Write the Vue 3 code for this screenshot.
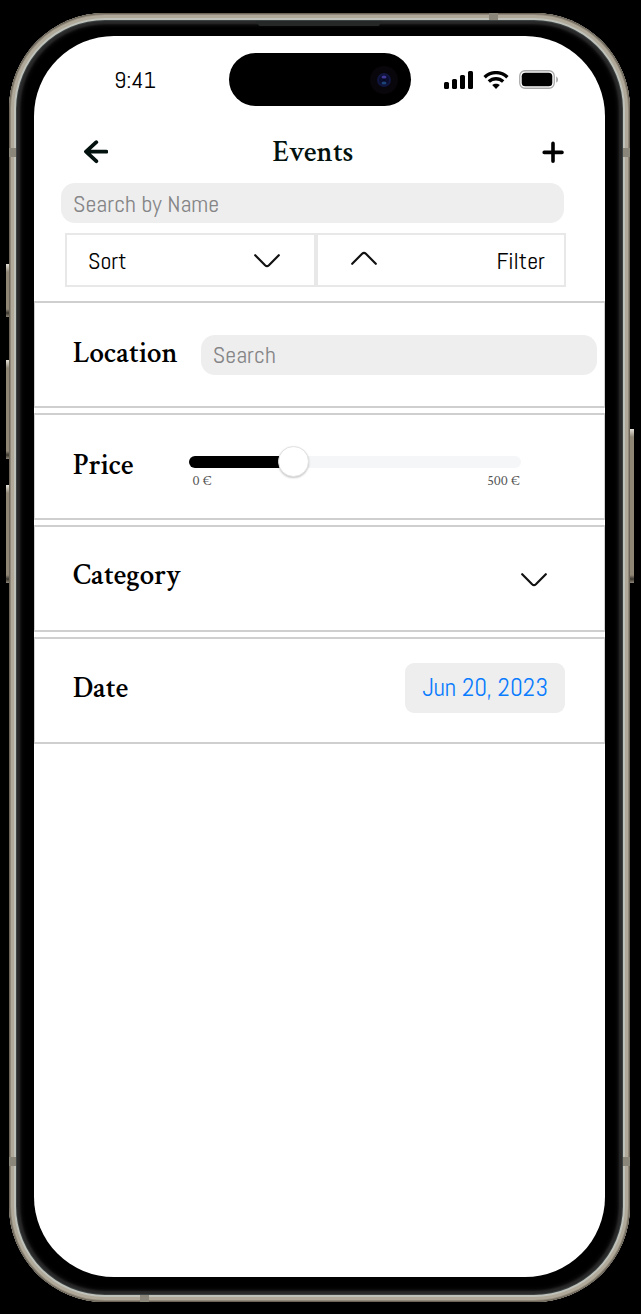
<script setup>
import { ref, computed } from 'vue'

const name = ref('')
const place = ref('')
const price = ref(147)
const maxPrice = 500
const fill = computed(() => `${(price.value / maxPrice) * 100}%`)
</script>

<template>
  <div class="stage">
    <div class="phone">
      <span class="key key-action"></span>
      <span class="key key-up"></span>
      <span class="key key-down"></span>
      <span class="key key-power"></span>
      <span class="band band-left-top"></span>
      <span class="band band-right-top"></span>
      <span class="band band-left-bottom"></span>
      <span class="band band-right-bottom"></span>
      <span class="band band-top"></span>
      <span class="band band-bottom"></span>
      <span class="speaker"></span>

      <div class="screen">
        <div class="status">
          <span class="time">9:41</span>
          <div class="island">
            <svg width="28" height="28" viewBox="0 0 28 28" aria-hidden="true">
              <circle cx="14" cy="14" r="14" fill="#08060a" />
              <circle cx="14" cy="14" r="7" fill="#10163f" />
              <circle cx="14" cy="14" r="5" fill="#0a0d2c" />
              <ellipse cx="14" cy="11" rx="2.5" ry="1.6" fill="#40389a" />
              <ellipse cx="14" cy="17" rx="2.5" ry="1.6" fill="#1c4478" />
              <circle cx="14" cy="14" r="1" fill="#05071c" />
            </svg>
          </div>
          <div class="signals">
            <svg width="29" height="18" viewBox="0 0 29 18" aria-hidden="true">
              <rect x="0" y="11" width="5" height="7" rx="1.5" />
              <rect x="8" y="8" width="5" height="10" rx="1.5" />
              <rect x="16" y="4" width="5" height="14" rx="1.5" />
              <rect x="24" y="0" width="5" height="18" rx="1.5" />
            </svg>
            <svg width="26" height="18" viewBox="0 0 26 18" fill="none" stroke="#000" stroke-width="3.4" aria-hidden="true">
              <path d="M1.6 6.2C8 .1 18 .1 24.4 6.2" />
              <path d="M5.8 10.6C10 6.7 16 6.7 20.2 10.6" />
              <path d="M13 18l-3.8-3.9c2.1-1.9 5.5-1.9 7.6 0z" fill="#000" stroke="none" />
            </svg>
            <svg width="40" height="19" viewBox="0 0 40 19" aria-hidden="true">
              <rect x=".75" y=".75" width="34.5" height="17.5" rx="5.2" fill="none" stroke="#a8a8a8" stroke-width="1.3" />
              <rect x="2.7" y="2.7" width="30.6" height="13.6" rx="3.6" />
              <path d="M37.2 6.4c2.4 1 2.4 5.2 0 6.2z" fill="#a8a8a8" />
            </svg>
          </div>
        </div>

        <header class="bar">
          <button class="icon-button back" type="button" aria-label="Back">
            <svg width="24" height="24" viewBox="0 0 24 24" fill="none" stroke="#03120f" stroke-width="3.8" stroke-linecap="round" stroke-linejoin="round">
              <path d="M12.3 2.2L2 11.6l10.3 9.6M2.6 11.6h19.7" />
            </svg>
          </button>
          <h1>Events</h1>
          <button class="icon-button add" type="button" aria-label="Add event">
            <svg width="22" height="22" viewBox="0 0 22 22" fill="none" stroke="#000" stroke-width="3.6" stroke-linecap="round">
              <path d="M11 2.4v17.8M2.2 11.4h17.8" />
            </svg>
          </button>
        </header>

        <input v-model="name" class="field name-field" type="text" placeholder="Search by Name" aria-label="Search by Name" />

        <div class="tools">
          <button class="tool" type="button">
            <span>Sort</span>
            <svg class="chevron lowered" width="26" height="14" viewBox="0 0 26 14"><path d="M1.2 1.2l9.9 10q1.9 1.7 3.8 0l9.9-10" /></svg>
          </button>
          <button class="tool" type="button">
            <svg class="chevron raised" width="26" height="14" viewBox="0 0 26 14"><path d="M1.2 12.8l9.9-10q1.9-1.7 3.8 0l9.9 10" /></svg>
            <span>Filter</span>
          </button>
        </div>

        <form class="filters" @submit.prevent>
          <div class="card location">
            <label for="place">Location</label>
            <input id="place" v-model="place" class="field" type="text" placeholder="Search" />
          </div>
          <div class="card price">
            <label for="price">Price</label>
            <div class="slider">
              <input id="price" v-model.number="price" type="range" min="0" :max="maxPrice" :style="{ '--fill': fill }" />
              <div class="limits"><span>0 €</span><span>500 €</span></div>
            </div>
          </div>
          <div class="card category">
            <label for="category">Category</label>
            <button id="category" class="icon-button" type="button">
              <svg class="chevron lowered" width="26" height="14" viewBox="0 0 26 14"><path d="M1.2 1.2l9.9 10q1.9 1.7 3.8 0l9.9-10" /></svg>
            </button>
          </div>
          <div class="card date">
            <label for="date">Date</label>
            <button id="date" class="chip" type="button">Jun 20, 2023</button>
          </div>
        </form>
      </div>
    </div>
  </div>
</template>

<style>
body {
  background: #000;
}
</style>

<style scoped>
.stage {
  display: flex;
  box-sizing: border-box;
  min-height: 100vh;
  padding: 13px 11px 12px 9px;
  background: #000;
  font-family: Abel, "Roboto Condensed", Lato, sans-serif;
  font-size: 24px;
  color: #000;
}

.phone {
  position: relative;
  display: flex;
  flex: 1;
  padding: 23px 25px 25px;
  border-radius: 96px;
  background: #000;
  box-shadow:
    inset 0 0 0 1px #6c6558,
    inset 0 0 0 2px #8f887a,
    inset 0 0 0 5px #b0a999,
    inset 0 0 0 7px #bfc2ba,
    inset 0 0 0 8px #3c4242,
    inset 0 0 2px 11px #2a2a2b,
    inset 0 0 4px 12px #161617;
}

.screen {
  flex: 1;
  min-width: 0;
  overflow: hidden;
  border-radius: 80px;
  background: #fff;
}

.key {
  position: absolute;
  left: -3px;
  width: 3px;
  background: linear-gradient(#e4e0d8, #8f8676 8px, #8f8676 calc(100% - 8px), #3a362f calc(100% - 4px), #8f8676);
}
.key-action { top: 251px; height: 53px; }
.key-up { top: 347px; height: 99px; }
.key-down { top: 472px; height: 98px; }
.key-power { top: 416px; right: -4px; left: auto; width: 4px; height: 154px; }

.band {
  position: absolute;
  width: 7px;
  height: 9px;
  background: #8a867a;
}
.band-left-top { top: 135px; left: 0; }
.band-right-top { top: 135px; right: 0; }
.band-left-bottom { bottom: 136px; left: 0; }
.band-right-bottom { right: 0; bottom: 136px; }
.band-top { top: 0; right: 132px; width: 9px; height: 7px; }
.band-bottom { bottom: 0; left: 131px; width: 9px; height: 7px; }

.speaker {
  position: absolute;
  top: 8px;
  left: 50%;
  width: 127px;
  height: 5px;
  margin-left: -64px;
  background: #252827;
  clip-path: polygon(0 0, 100% 0, 97% 100%, 3% 100%);
}

.status {
  display: grid;
  grid-template-columns: 1fr 182px 1fr;
  align-items: center;
  padding-top: 17px;
}
.time {
  padding-left: 80px;
}
.island {
  display: flex;
  align-items: center;
  justify-content: flex-end;
  box-sizing: border-box;
  height: 53px;
  padding-right: 13px;
  border-radius: 27px;
  background: #000;
}
.signals {
  display: flex;
  align-items: center;
  justify-content: flex-end;
  gap: 10px;
  padding-right: 46px;
}

.bar {
  display: grid;
  grid-template-columns: 1fr auto 1fr;
  align-items: center;
  height: 44px;
  margin-top: 24px;
  padding: 0 41px 0 28px;
}
h1,
label {
  margin: 0;
  font: 600 29px/32px "Crimson Text", "Liberation Serif", serif;
}
label {
  padding-bottom: 4px;
}
h1 {
  color: #03120f;
}

button {
  padding: 0;
  border: 0;
  background: none;
  color: inherit;
  font: inherit;
}
svg {
  display: block;
  flex: none;
}
.back {
  justify-self: start;
  padding-left: 22px;
}
.add {
  justify-self: end;
}

.field {
  display: block;
  box-sizing: border-box;
  width: 100%;
  min-width: 0;
  height: 40px;
  padding: 0 12px;
  border: 0;
  border-radius: 14px;
  background: #eee;
  color: #000;
  font: inherit;
}
.field::placeholder {
  color: #858587;
  opacity: 1;
}
.name-field {
  width: calc(100% - 68px);
  margin: 9px 41px 0 27px;
}

.tools {
  display: grid;
  grid-template-columns: 1fr 1fr;
  margin: 10px 39px 0 31px;
}
.tool {
  display: flex;
  align-items: center;
  justify-content: space-between;
  height: 54px;
  padding: 0 34px 0 21px;
  border: 2px solid #e8e8e8;
}
.tool + .tool {
  padding: 0 19px 0 33px;
}
.chevron {
  fill: none;
  stroke: #111;
  stroke-width: 2.2;
  stroke-linecap: round;
}
.raised {
  margin-bottom: 4px;
}
.lowered {
  margin-top: 2px;
}

.filters {
  display: grid;
  gap: 5px;
  margin-top: 14px;
}
.card {
  display: flex;
  align-items: center;
  box-sizing: border-box;
  height: 107px;
  padding-left: 38px;
  border: solid #cfcfcf;
  border-width: 2px 1px;
}
.location {
  gap: 23px;
  padding-right: 7px;
}
.price {
  justify-content: space-between;
  padding-right: 83px;
}
.category {
  justify-content: space-between;
  padding-right: 57px;
}
.category label {
  padding-bottom: 8px;
}
.date {
  justify-content: space-between;
  padding-right: 39px;
  padding-bottom: 6px;
}
.date label {
  padding-bottom: 0;
}

.slider {
  width: 74%;
  padding-top: 3px;
}
.slider input {
  display: block;
  width: 100%;
  height: 31px;
  margin: 0;
  appearance: none;
  background: none;
}
.slider input::-webkit-slider-runnable-track {
  height: 12px;
  border-radius: 6px;
  background: linear-gradient(90deg, #000 var(--fill), #f5f6f8 var(--fill));
}
.slider input::-webkit-slider-thumb {
  box-sizing: border-box;
  width: 31px;
  height: 31px;
  margin-top: -10px;
  border: 1px solid #e2e2e2;
  border-radius: 50%;
  appearance: none;
  background: #fff;
  box-shadow: 0 1px 2px rgba(0, 0, 0, 0.22);
}
.limits {
  display: flex;
  justify-content: space-between;
  margin-top: -6px;
  padding: 0 1px 0 3px;
  color: #555;
  font: 14px/18px "Crimson Text", "Liberation Serif", serif;
  font-variant-numeric: lining-nums;
}

.chip {
  height: 50px;
  padding: 0 17px;
  border-radius: 9px;
  background: #eee;
  color: #0a7cff;
  font-size: 25px;
}
</style>
